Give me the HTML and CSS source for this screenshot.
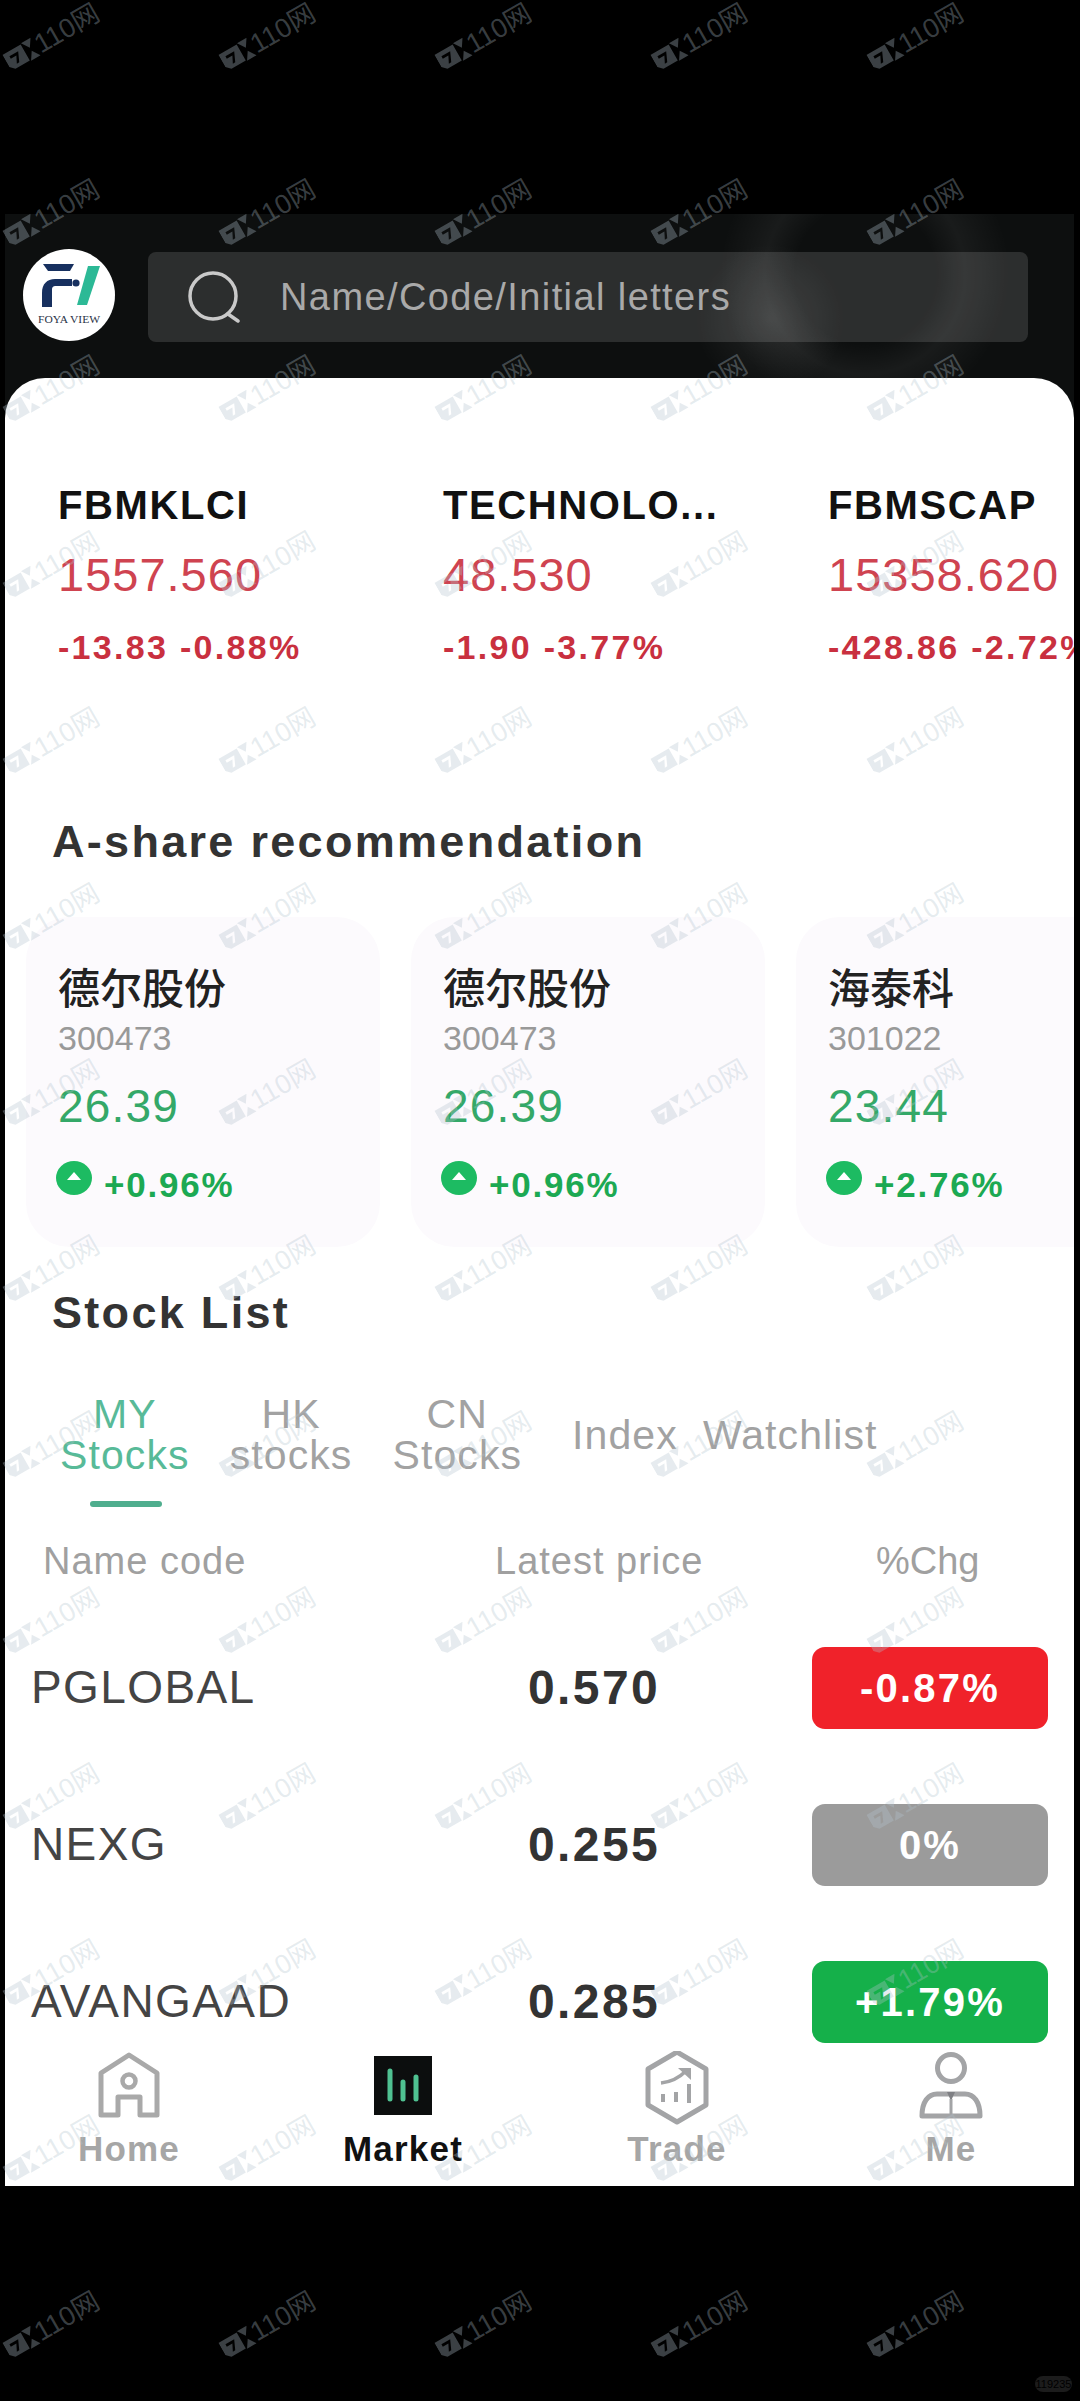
FILE: index.html
```html
<!DOCTYPE html>
<html lang="en">
<head>
<meta charset="utf-8">
<title>Market</title>
<link rel="stylesheet" href="styles.css">
</head>
<body>
<main class="phone">
  <header class="top">
    <div class="logo">
      <svg viewBox="0 0 92 92" width="92" height="92">
        <circle cx="46" cy="46" r="46" fill="#fff"/>
        <path d="M20 15h31l-4 7H25z" fill="#17305f"/>
        <path d="M19 44c0-9 5-14 13-14h17v7H33c-3 0-4 1-4 4v17H19z" fill="#17305f"/>
        <circle cx="53" cy="34" r="3.6" fill="#17305f"/>
        <path d="M65 17h12L64 56H54z" fill="#2cb996"/>
        <text class="logo-text" x="15" y="74" textLength="62" lengthAdjust="spacingAndGlyphs">FOYA VIEW</text>
      </svg>
    </div>
    <div class="search">
      <svg class="search-icon" viewBox="0 0 54 52" width="54" height="52">
        <circle cx="26" cy="25" r="23" fill="none" stroke="#c9c9c9" stroke-width="3.5"/>
        <path d="M41 43l10 7" stroke="#c9c9c9" stroke-width="3.5" stroke-linecap="round"/>
      </svg>
      <span class="search-text">Name/Code/Initial letters</span>
    </div>
  </header>

  <section class="sheet">
    <div class="indices">
      <div class="index">
        <div class="index-name">FBMKLCI</div>
        <div class="index-price">1557.560</div>
        <div class="index-chg">-13.83 -0.88%</div>
      </div>
      <div class="index">
        <div class="index-name">TECHNOLO...</div>
        <div class="index-price">48.530</div>
        <div class="index-chg">-1.90 -3.77%</div>
      </div>
      <div class="index">
        <div class="index-name">FBMSCAP</div>
        <div class="index-price">15358.620</div>
        <div class="index-chg">-428.86 -2.72%</div>
      </div>
    </div>

    <h2 class="heading heading-share">A-share recommendation</h2>
    <div class="cards">
      <article class="card">
        <div class="card-name">德尔股份</div>
        <div class="card-code">300473</div>
        <div class="card-price">26.39</div>
        <div class="card-chg"><svg class="up" viewBox="0 0 36 34" width="36" height="34"><ellipse cx="18" cy="17" rx="18" ry="17" fill="#1dbb62"/><path d="M18 11l7 8H11z" fill="#fff"/></svg><span>+0.96%</span></div>
      </article>
      <article class="card">
        <div class="card-name">德尔股份</div>
        <div class="card-code">300473</div>
        <div class="card-price">26.39</div>
        <div class="card-chg"><svg class="up" viewBox="0 0 36 34" width="36" height="34"><ellipse cx="18" cy="17" rx="18" ry="17" fill="#1dbb62"/><path d="M18 11l7 8H11z" fill="#fff"/></svg><span>+0.96%</span></div>
      </article>
      <article class="card">
        <div class="card-name">海泰科</div>
        <div class="card-code">301022</div>
        <div class="card-price">23.44</div>
        <div class="card-chg"><svg class="up" viewBox="0 0 36 34" width="36" height="34"><ellipse cx="18" cy="17" rx="18" ry="17" fill="#1dbb62"/><path d="M18 11l7 8H11z" fill="#fff"/></svg><span>+2.76%</span></div>
      </article>
    </div>

    <h2 class="heading heading-list">Stock List</h2>
    <nav class="tabs">
      <div class="tab tab-active">MY<br>Stocks</div>
      <div class="tab">HK<br>stocks</div>
      <div class="tab">CN<br>Stocks</div>
      <div class="tab">Index</div>
      <div class="tab">Watchlist</div>
    </nav>
    <div class="tab-line"></div>

    <div class="thead">
      <span class="col-name">Name code</span>
      <span class="col-price">Latest price</span>
      <span class="col-chg">%Chg</span>
    </div>
    <div class="rows">
      <div class="row">
        <span class="col-name stock">PGLOBAL</span>
        <span class="col-price last">0.570</span>
        <span class="badge badge-red">-0.87%</span>
      </div>
      <div class="row">
        <span class="col-name stock">NEXG</span>
        <span class="col-price last">0.255</span>
        <span class="badge badge-gray">0%</span>
      </div>
      <div class="row">
        <span class="col-name stock">AVANGAAD</span>
        <span class="col-price last">0.285</span>
        <span class="badge badge-green">+1.79%</span>
      </div>
    </div>

    <nav class="bottom">
      <div class="nav-item">
        <svg class="nav-icon" viewBox="0 0 64 74" width="64" height="74">
          <path d="M4 64V22L32 4l28 18v42H43V46H21v18z" fill="none" stroke="#a9a9a9" stroke-width="5" stroke-linejoin="round"/>
          <circle cx="32" cy="30" r="6.5" fill="none" stroke="#a9a9a9" stroke-width="4.5"/>
        </svg>
        <span class="nav-label">Home</span>
      </div>
      <div class="nav-item nav-active">
        <svg class="nav-icon" viewBox="0 0 64 74" width="64" height="74">
          <rect x="3" y="5" width="58" height="59" fill="#0c0e0e"/>
          <path d="M19 20v28M32 31v17M45 26v22" stroke="#4fc191" stroke-width="5" stroke-linecap="round"/>
        </svg>
        <span class="nav-label">Market</span>
      </div>
      <div class="nav-item">
        <svg class="nav-icon" viewBox="0 0 64 74" width="64" height="74">
          <path d="M32 1l29 17v36L32 71 3 54V18z" fill="none" stroke="#a3a4a6" stroke-width="5" stroke-linejoin="round"/>
          <path d="M16 32c9-1 18-5 25-12" fill="none" stroke="#a3a4a6" stroke-width="3.5"/>
          <path d="M33 17h13v12z" fill="#a3a4a6"/>
          <path d="M18 43v8M31 41v10M44 33v19" stroke="#a3a4a6" stroke-width="4"/>
        </svg>
        <span class="nav-label">Trade</span>
      </div>
      <div class="nav-item">
        <svg class="nav-icon" viewBox="0 0 64 74" width="64" height="74">
          <circle cx="32" cy="17" r="13.5" fill="none" stroke="#a3a4a6" stroke-width="5"/>
          <path d="M3 65c0-14 6-22 15-22h28c9 0 15 8 15 22z" fill="none" stroke="#a3a4a6" stroke-width="5" stroke-linejoin="round"/>
          <path d="M28 41h8l-4 9z" fill="#7f8084"/>
          <path d="M32 48v16" stroke="#a3a4a6" stroke-width="3"/>
        </svg>
        <span class="nav-label">Me</span>
      </div>
    </nav>
  </section>
</main>
<div class="marks" id="marks" aria-hidden="true"></div>
<div class="pill">119235</div>
<script src="marks.js"></script>
</body>
</html>
```
FILE: marks.js
```js
var box = document.getElementById('marks');
var html = '';
for (var i = 0; i < 70; i++) {
  html += '<div class="mark"><div class="mark-in"><svg viewBox="0 0 36 26" width="33" height="24"><path fill-rule="evenodd" d="M0 3h23v20H5L0 18zM6 8v3h7l-4 8h3l5-11z" fill="currentColor"/><path d="M24 2h12l-6 9zM24 24h12l-6-9z" fill="currentColor"/></svg><span>110网</span></div></div>';
}
box.innerHTML = html;
```
FILE: styles.css
```css
* { box-sizing: border-box; }
html, body { margin: 0; padding: 0; background: #000; }
body {
  position: relative;
  width: 1080px;
  height: 2401px;
  overflow: hidden;
  font-family: "Liberation Sans", "Noto Sans CJK SC", sans-serif;
}
.phone {
  width: 1069px;
  margin: 214px 0 0 5px;
  height: 1972px;
  display: flex;
  flex-direction: column;
  overflow: hidden;
  background:
    radial-gradient(circle at 765px 105px, rgba(255,255,255,.09) 0, rgba(0,0,0,0) 75px),
    radial-gradient(circle at 860px 60px, rgba(0,0,0,0) 70px, rgba(255,255,255,.05) 100px, rgba(0,0,0,0) 145px),
    #0d0f0f;
}
.top {
  height: 164px;
  flex: none;
  display: flex;
  gap: 51px;
  padding: 35px 0 0 18px;
}
.logo { width: 92px; height: 92px; flex: none; margin-right: -18px; }
.logo svg { display: block; }
.logo-text {
  font-family: "Liberation Serif", serif;
  font-size: 10px;
  fill: #2a3347;
}
.search {
  width: 880px;
  height: 90px;
  margin-top: 3px;
  border-radius: 8px;
  background: rgba(255,255,255,.13);
  display: flex;
  align-items: center;
  padding-left: 39px;
  gap: 39px;
}
.search-icon { flex: none; }
.search-text {
  font-size: 38px;
  color: #a9a9a9;
  letter-spacing: 1.4px;
}
.sheet {
  flex: 1;
  background: #fff;
  border-radius: 40px 40px 0 0;
  overflow: hidden;
  display: flex;
  flex-direction: column;
}
.indices {
  display: flex;
  padding: 102px 0 0 53px;
  height: 330px;
  flex: none;
  white-space: nowrap;
}
.index { flex: none; width: 385px; }
.index-name {
  font-size: 40px;
  line-height: 50px;
  font-weight: 700;
  color: #111;
  letter-spacing: 1.6px;
}
.index-price {
  margin-top: 20px;
  font-size: 47px;
  line-height: 50px;
  color: #cf4350;
  letter-spacing: 1px;
}
.index-chg {
  margin-top: 27px;
  font-size: 34px;
  line-height: 40px;
  font-weight: 700;
  color: #c9303f;
  letter-spacing: 2.3px;
}
.heading {
  margin: 0;
  font-size: 45px;
  line-height: 50px;
  font-weight: 700;
  color: #333;
  flex: none;
  letter-spacing: 2.3px;
}
.heading-share { padding-left: 47px; margin-top: 109px; }
.cards {
  display: flex;
  gap: 31px;
  margin-top: 50px;
  padding-left: 21px;
  flex: none;
}
.card {
  flex: none;
  width: 354px;
  height: 330px;
  padding: 48px 0 0 32px;
  border-radius: 44px;
  background: #fcfafd;
  white-space: nowrap;
}
.card-name {
  font-size: 42px;
  line-height: 50px;
  font-weight: 500;
  color: #222;
}
.card-code {
  margin-top: 3px;
  font-size: 34px;
  line-height: 40px;
  color: #999;
}
.card-price {
  margin-top: 23px;
  font-size: 46px;
  line-height: 50px;
  color: #34a868;
  letter-spacing: 1.2px;
}
.card-chg {
  margin-top: 30px;
  display: flex;
  align-items: flex-start;
  gap: 12px;
  font-size: 35px;
  line-height: 38px;
  font-weight: 700;
  color: #1ca953;
  letter-spacing: 1.8px;
}
.card-chg span { margin-top: 5px; }
.up { flex: none; margin-left: -2px; }
.heading-list { padding-left: 47px; margin-top: 41px; }
.tabs {
  display: flex;
  align-items: center;
  margin-top: 51px;
  padding-left: 55px;
  height: 92px;
  flex: none;
  font-size: 41px;
  line-height: 41px;
  letter-spacing: 1.1px;
  color: #a2a2a2;
  text-align: center;
  white-space: nowrap;
}
.tab { flex: none; margin-right: 40px; }
.tab-active { color: #58ba98; }
.tab:nth-child(3) { margin-right: 50px; }
.tab:nth-child(4) { margin-right: 25px; }
.tab-line {
  width: 72px;
  height: 6px;
  margin: 20px 0 0 85px;
  border-radius: 3px;
  background: #4fae8e;
  flex: none;
}
.thead {
  display: flex;
  margin-top: 32px;
  height: 44px;
  align-items: center;
  font-size: 38px;
  color: #a0a0a0;
  flex: none;
  letter-spacing: 1px;
}
.col-name { width: 490px; padding-left: 38px; flex: none; }
.col-price { width: 381px; flex: none; }
.col-chg { flex: none; letter-spacing: 0; }
.rows {
  display: flex;
  flex-direction: column;
  margin-top: 64px;
  gap: 75px;
  flex: none;
}
.row {
  display: flex;
  align-items: center;
  height: 82px;
}
.row .col-name { padding-left: 26px; width: 523px; padding-bottom: 2px; }
.row .col-price { width: 284px; padding-bottom: 2px; }
.stock { font-size: 46px; color: #444; letter-spacing: 1.4px; }
.last { font-size: 48px; font-weight: 700; color: #333; letter-spacing: 2.4px; }
.badge {
  width: 236px;
  height: 82px;
  flex: none;
  border-radius: 13px;
  color: #fff;
  font-size: 40px;
  font-weight: 700;
  letter-spacing: 2.2px;
  display: flex;
  align-items: center;
  justify-content: center;
}
.badge-red { background: #f0222a; }
.badge-gray { background: #9b9b9b; }
.badge-green { background: #15b04a; }
.bottom {
  display: flex;
  gap: 150px;
  padding-left: 62px;
  margin-top: 8px;
  flex: none;
}
.nav-item {
  width: 124px;
  flex: none;
  display: flex;
  flex-direction: column;
  align-items: center;
}
.nav-icon { display: block; }
.nav-label {
  font-size: 35px;
  line-height: 40px;
  font-weight: 700;
  color: #a6a6a6;
  letter-spacing: 1.2px;
  margin-top: 4px;
  white-space: nowrap;
}
.nav-active .nav-label { color: #111; }
.marks {
  position: absolute;
  left: 0;
  top: 0;
  width: 1080px;
  display: grid;
  grid-template-columns: repeat(5, 216px);
  grid-auto-rows: 176px;
  pointer-events: none;
  color: rgba(178, 195, 205, .33);
}
.mark { position: relative; }
.mark-in {
  position: absolute;
  left: 0;
  top: 22px;
  display: flex;
  align-items: center;
  gap: 1px;
  transform: rotate(-30deg);
  transform-origin: 50% 50%;
  font-size: 27px;
  line-height: 30px;
  white-space: nowrap;
}
.mark-in svg { display: block; flex: none; }
.pill {
  position: absolute;
  left: 1035px;
  top: 2376px;
  width: 37px;
  height: 16px;
  border-radius: 8px;
  background: #1c1c1c;
  color: #000;
  font-size: 11px;
  line-height: 16px;
  text-align: center;
}
```
